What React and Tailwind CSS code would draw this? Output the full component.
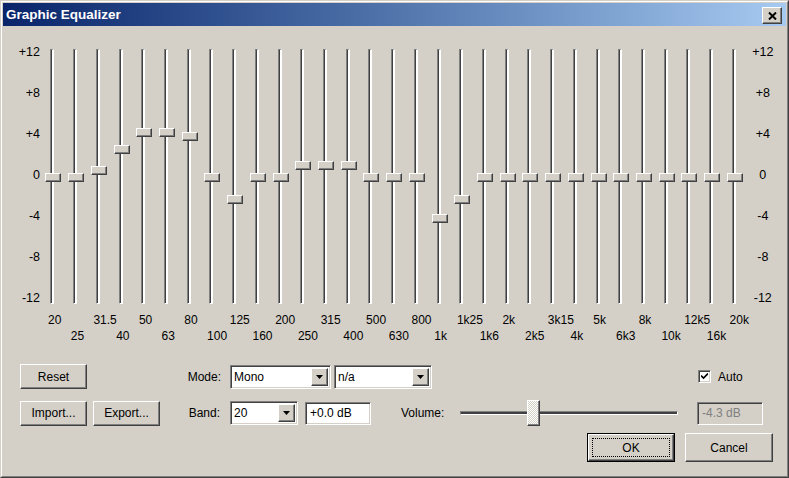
const BANDS = [
  ['20', 0], ['25', 0], ['31.5', 0.66], ['40', 2.7], ['50', 4.35], ['63', 4.35], ['80', 3.95],
  ['100', 0], ['125', -2.15], ['160', 0], ['200', 0], ['250', 1.1], ['315', 1.1], ['400', 1.1],
  ['500', 0], ['630', 0], ['800', 0], ['1k', -4], ['1k25', -2.2], ['1k6', 0], ['2k', 0],
  ['2k5', 0], ['3k15', 0], ['4k', 0], ['5k', 0], ['6k3', 0], ['8k', 0], ['10k', 0],
  ['12k5', 0], ['16k', 0], ['20k', 0],
]

const SCALE = ['+12', '+8', '+4', '0', '-4', '-8', '-12']

const raised = 'border border-t-white border-l-white border-r-[#404040] border-b-[#404040] shadow-[inset_-1px_-1px_0_#808080] bg-[#d4d0c8]'
const sunken = 'border border-t-[#808080] border-l-[#808080] border-r-white border-b-white shadow-[inset_1px_1px_0_#404040,inset_-1px_-1px_0_#d4d0c8]'

function Button({ children, className = '' }) {
  return (
    <div className={`${raised} flex items-center justify-center text-black ${className}`}>
      {children}
    </div>
  )
}

function Arrow() {
  return (
    <svg width="7" height="4" viewBox="0 0 7 4">
      <path d="M0 0 H7 L3.5 4 Z" fill="#000" />
    </svg>
  )
}

function Combo({ value, className = '' }) {
  return (
    <div className={`${sunken} bg-white flex items-stretch p-[2px] pl-[3px] ${className}`}>
      <span className="flex-1 flex items-center leading-none">{value}</span>
      <div className={`${raised} w-[17px] flex items-center justify-center`}>
        <Arrow />
      </div>
    </div>
  )
}

function Field({ value, disabled, className = '' }) {
  return (
    <div className={`${sunken} ${disabled ? 'bg-[#d4d0c8] text-[#808080]' : 'bg-white'} flex items-center pl-[4px] ${className}`}>
      {value}
    </div>
  )
}

function Band({ label, value, index }) {
  const top = Math.round(123.5 - value * 10.25)
  return (
    <div className="w-[22.73px] shrink-0 flex flex-col pt-[4px]">
      <div className="relative h-[255px] flex justify-center">
        <div className="w-[4px] h-full bg-[#404040] border-l border-l-[#808080] border-r-2 border-r-white border-t border-t-[#808080] border-b border-b-white" />
        <div
          className={`${raised} absolute left-[calc(50%-7px)] w-[16px] h-[9px]`}
          style={{ top }}
        />
      </div>
      <div className="mt-[8px] flex flex-col">
        <div className="h-[16px] leading-[16px] pl-[7px] whitespace-nowrap">{index % 2 === 0 ? label : ''}</div>
        <div className="h-[16px] leading-[16px] pl-[7px] whitespace-nowrap">{index % 2 === 1 ? label : ''}</div>
      </div>
    </div>
  )
}

export default function App() {
  return (
    <div className="w-[789px] h-[478px] border border-t-[#d4d0c8] border-l-[#d4d0c8] border-r-[#404040] border-b-[#404040] font-['Liberation_Sans',Arial,sans-serif] text-[12px] text-black select-none">
      <div className="h-full border border-t-white border-l-white border-r-[#808080] border-b-[#808080] p-px bg-[#d4d0c8] flex flex-col">
        {/* title bar */}
        <div className="h-[23px] shrink-0 flex items-center bg-gradient-to-r from-[#0a246a] to-[#a6caf0] pl-[3px] pr-[4px]">
          <span className="flex-1 text-white font-bold text-[13.5px] mt-[1px]">Graphic Equalizer</span>
          <div className={`${raised} w-[20px] h-[17px] mt-[2px] flex items-center justify-center`}>
            <svg width="9" height="8" viewBox="0 0 9 8">
              <path d="M1 0.5 L8 7.5 M8 0.5 L1 7.5" stroke="#000" strokeWidth="2" />
            </svg>
          </div>
        </div>

        {/* equalizer */}
        <div className="mt-[19px] flex items-start">
          <div className="w-[38px] shrink-0 flex flex-col gap-[27px] text-right pr-[1px] text-[12.5px]">
            {SCALE.map((s) => (
              <div key={s} className="h-[14px] leading-[14px]">{s}</div>
            ))}
          </div>
          {BANDS.map(([label, value], i) => (
            <Band key={label} label={label} value={value} index={i} />
          ))}
          <div className="w-[35px] shrink-0 flex flex-col gap-[27px] text-center text-[12.5px]">
            {SCALE.map((s) => (
              <div key={s} className="h-[14px] leading-[14px]">{s}</div>
            ))}
          </div>
        </div>

        {/* controls */}
        <div className="mt-[20px] pl-[17px] flex flex-col">
          <div className="h-[25px] flex items-center">
            <Button className="w-[67px] h-[25px]">Reset</Button>
            <div className="w-[134px] text-right">Mode:</div>
            <Combo value="Mono" className="ml-[9px] w-[101px] h-[24px]" />
            <Combo value="n/a" className="ml-[3px] w-[98px] h-[24px]" />
            <div className={`${sunken} bg-white ml-[266px] w-[13px] h-[13px] flex items-center justify-center`}>
              <svg width="7" height="7" viewBox="0 0 7 7">
                <path d="M0 2.5 L2.5 5 L7 0.5" stroke="#000" strokeWidth="1.6" fill="none" />
              </svg>
            </div>
            <span className="ml-[7px]">Auto</span>
          </div>

          <div className="mt-[11px] h-[26px] flex items-center">
            <Button className="w-[67px] h-[25px]">Import...</Button>
            <Button className="ml-[6px] w-[67px] h-[25px]">Export...</Button>
            <div className="w-[60px] text-right">Band:</div>
            <Combo value="20" className="ml-[10px] w-[68px] h-[24px]" />
            <Field value="+0.0 dB" className="ml-[7px] w-[66px] h-[23px]" />
            <div className="ml-[30px] w-[59px]">Volume:</div>
            <div className="relative w-[218px] h-[26px] flex items-center">
              <div className="w-full h-[4px] bg-[#404040] border-t border-t-[#808080] border-b border-b-white border-l border-l-[#808080] border-r border-r-white" />
              <div className="absolute left-[67px] top-0 w-[13px] h-[26px] border border-t-white border-l-white border-r-[#404040] border-b-[#404040] shadow-[inset_-1px_-1px_0_#808080] bg-[repeating-conic-gradient(#fff_0_25%,#d4d0c8_0_50%)] bg-[length:2px_2px]" />
            </div>
            <Field value="-4.3 dB" disabled className="ml-[19px] w-[66px] h-[23px]" />
          </div>

          <div className="mt-[7px] flex">
            <div className="ml-[567px] w-[88px] h-[29px] border border-black">
              <div className={`${raised} w-full h-full p-[3px]`}>
                <div className="w-full h-full border border-dotted border-black flex items-center justify-center">OK</div>
              </div>
            </div>
            <Button className="ml-[10px] w-[88px] h-[29px]">Cancel</Button>
          </div>
        </div>
      </div>
    </div>
  )
}
